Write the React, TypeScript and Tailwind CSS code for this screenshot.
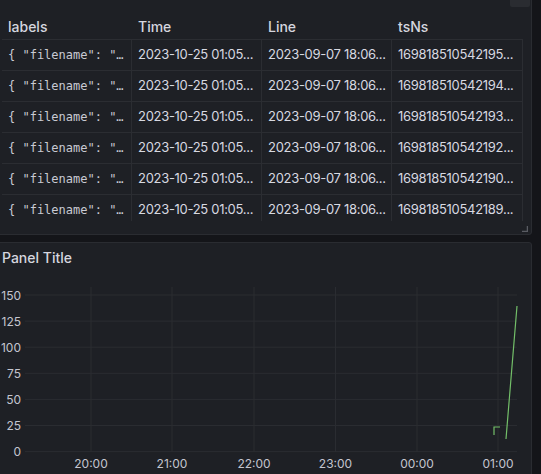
import React from "react";

const rows = [
  "169818510542195...",
  "169818510542194...",
  "169818510542193...",
  "169818510542192...",
  "169818510542190...",
  "169818510542189...",
];

const yTicks = ["150", "125", "100", "75", "50", "25", "0"];
const xTicks: [string, number][] = [
  ["20:00", 91],
  ["21:00", 172],
  ["22:00", 254],
  ["23:00", 335.5],
  ["00:00", 417],
  ["01:00", 498],
];

export default function App() {
  const sans = { fontFamily: "Inter, 'Noto Sans', sans-serif" } as React.CSSProperties;
  return (
    <div
      className="w-[541px] h-[474px] overflow-hidden bg-[#141519] relative text-[#ccccdc]"
      style={sans}
    >
      <div className="flex flex-col gap-[7px] ml-[-6px] w-[538px] mt-[-10px]">
        {/* Table panel */}
        <div className="relative h-[245px] border border-[#2a2c31] rounded-[3px] bg-[#1e2025]">
          <div className="absolute right-[1px] top-[9px] w-[20px] h-[7px] bg-[#2a2c31] rounded-b-[2px]" />
          <div className="ml-[7px] mt-[19px] h-[211px] w-[521px] overflow-hidden">
            <div className="flex h-[29px] items-center pt-[3px] text-[14px] font-medium text-[#d5d6df]">
              <div className="w-[130px] px-[6px]">labels</div>
              <div className="w-[130px] px-[6px]">Time</div>
              <div className="w-[130px] px-[6px]">Line</div>
              <div className="w-[130px] px-[6px]">tsNs</div>
            </div>
            {rows.map((ts) => (
              <div key={ts} className="flex h-[31px] border-t border-[#2b2d32]">
                <div
                  className="w-[130px] px-[6px] flex items-center border-r border-[#2b2d32] whitespace-nowrap overflow-hidden text-[12px] text-[#c9cad3]"
                  style={{ fontFamily: "'DejaVu Sans Mono', monospace" }}
                >
                  {'{ "filename": "…'}
                </div>
                <div className="w-[130px] px-[6px] flex items-center border-r border-[#2b2d32] whitespace-nowrap overflow-hidden text-[13px] tracking-[-0.3px] text-[#d8d9e1]">
                  2023-10-25 01:05...
                </div>
                <div className="w-[130px] px-[6px] flex items-center border-r border-[#2b2d32] whitespace-nowrap overflow-hidden text-[13px] tracking-[-0.3px] text-[#d8d9e1]">
                  2023-09-07 18:06...
                </div>
                <div className="w-[131px] px-[6px] flex items-center border-r border-[#2b2d32] whitespace-nowrap overflow-hidden text-[13px] tracking-[-0.3px] text-[#d8d9e1]">
                  {ts}
                </div>
              </div>
            ))}
          </div>
          <svg
            className="absolute right-[3px] bottom-[2px]"
            width="6"
            height="6"
            viewBox="0 0 6 6"
          >
            <path d="M5.5 0 V5.5 H0" stroke="#5a5c63" strokeWidth="1.5" fill="none" />
          </svg>
        </div>

        {/* Chart panel */}
        <div className="h-[260px] border border-[#2a2c31] rounded-[3px] bg-[#1e2025]">
          <div className="h-[28px] flex items-center pl-[7px] text-[14px] font-medium text-[#d5d6df]">
            Panel Title
          </div>
          <svg
            className="ml-[5px] mt-[9px] block"
            width="530"
            height="200"
            viewBox="0 0 530 200"
          >
            {yTicks.map((t, i) => {
              const y = 15 + i * 26.1;
              return (
                <g key={t}>
                  <line x1="25" x2="517" y1={y} y2={y} stroke="#2a2c31" strokeWidth="1" />
                  <text
                    x="21"
                    y={y + 4.5}
                    textAnchor="end"
                    fontSize="12"
                    fill="#c4c5cf"
                    style={sans}
                  >
                    {t}
                  </text>
                </g>
              );
            })}
            {xTicks.map(([t, x]) => (
              <g key={t}>
                <line x1={x} x2={x} y1="7" y2="172" stroke="#2a2c31" strokeWidth="1" />
                <text
                  x={x}
                  y="188"
                  textAnchor="middle"
                  fontSize="12"
                  fill="#c4c5cf"
                  style={sans}
                >
                  {t}
                </text>
              </g>
            ))}
            <path
              d="M494 155 V147 H500 M506 159 L517 26"
              stroke="#73bf69"
              strokeWidth="1.2"
              fill="none"
            />
          </svg>
        </div>
      </div>
    </div>
  );
}
